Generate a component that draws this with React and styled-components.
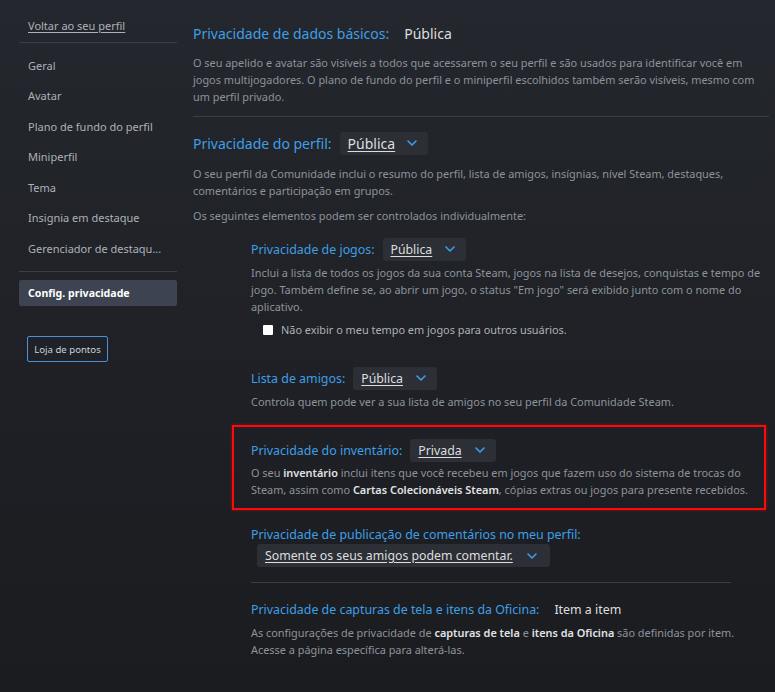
import React from "react";
import styled, { createGlobalStyle } from "styled-components";

const Global = createGlobalStyle`
  html, body { margin: 0; padding: 0; }
  body {
    background: linear-gradient(180deg, #24272d 0%, #1e2025 60%, #1b1c20 100%);
    min-height: 692px;
    font-family: "Noto Sans", "Open Sans", Arial, sans-serif;
    color: #acb2b8;
  }
`;

const Page = styled.div`
  display: flex;
  align-items: flex-start;
  gap: 16px;
  padding-left: 19px;
  width: 775px;
  min-height: 692px;
  box-sizing: border-box;
`;

const Sidebar = styled.nav`
  width: 158px;
  flex: none;
  display: flex;
  flex-direction: column;
  padding-top: 18px;
`;

const BackLink = styled.a`
  font-size: 11px;
  line-height: 16px;
  color: #acb2b8;
  text-decoration: underline;
  text-underline-offset: 2px;
  padding-left: 9px;
`;

const SideDivider = styled.div`
  height: 1px;
  background: #3a3e45;
  margin-top: ${(p) => p.$mt}px;
`;

const SideItem = styled.div`
  height: 30.5px;
  display: flex;
  align-items: center;
  padding-left: 9px;
  font-size: 11px;
  color: #acb2b8;
  white-space: nowrap;
`;

const SideList = styled.div`
  display: flex;
  flex-direction: column;
  margin-top: 7px;
`;

const SideSelected = styled.div`
  margin-top: 8px;
  height: 26px;
  display: flex;
  align-items: center;
  padding-left: 9px;
  border-radius: 2px;
  background: #3d4350;
  color: #ffffff;
  font-size: 10.6px;
  font-weight: 700;
`;

const PointsButton = styled.button`
  margin-top: 30px;
  margin-left: 8px;
  align-self: flex-start;
  height: 26px;
  width: 81px;
  padding: 0;
  background: transparent;
  border: 1px solid #4b8fd6;
  border-radius: 2px;
  color: #c6d4df;
  font-family: inherit;
  font-size: 9.6px;
`;

const Main = styled.main`
  width: 576px;
  flex: none;
  padding-top: 23px;
  display: flex;
  flex-direction: column;
`;

const TitleRow = styled.div`
  display: flex;
  align-items: center;
  gap: ${(p) => p.$gap ?? 8}px;
  min-height: ${(p) => p.$h ?? 20}px;
  margin-top: ${(p) => p.$mt ?? 0}px;
  font-size: ${(p) => p.$fs ?? 14}px;
`;

const Label = styled.span`
  color: #3e9fe6;
`;

const Value = styled.span`
  color: #dcdedf;
`;

const Desc = styled.p`
  margin: ${(p) => p.$mt ?? 0}px 0 0;
  font-size: 10.9px;
  line-height: 17px;
  color: #8c939b;
  b { color: #e1e3e5; font-weight: 600; }
`;

const Divider = styled.div`
  height: 1px;
  background: #3a3f47;
  margin-top: ${(p) => p.$mt}px;
  margin-right: ${(p) => p.$mr ?? 0}px;
`;

const Sub = styled.div`
  margin-left: 58px;
  display: flex;
  flex-direction: column;
`;

const Dropdown = styled.div`
  display: inline-flex;
  align-items: center;
  gap: ${(p) => p.$gap ?? 13}px;
  height: ${(p) => p.$h ?? 23}px;
  padding: 0 ${(p) => p.$pr ?? 11}px 0 8px;
  background: #2c2f36;
  border-radius: 3px;
  font-size: ${(p) => p.$fs ?? 12.3}px;
  margin-left: ${(p) => p.$ml ?? 0}px;
  margin-top: ${(p) => p.$mt ?? 0}px;
  align-self: flex-start;
  span {
    color: #dcdedf;
    text-decoration: underline;
    text-underline-offset: 2px;
  }
`;

const Chevron = () => (
  <svg width="10" height="6" viewBox="0 0 10 6" fill="none">
    <path d="M1 1l4 4 4-4" stroke="#3e9fe6" strokeWidth="1.6" strokeLinecap="round" strokeLinejoin="round" />
  </svg>
);

const CheckRow = styled.label`
  margin-top: 6px;
  margin-left: 12px;
  display: flex;
  align-items: center;
  gap: 8px;
  height: 17px;
  font-size: 10.9px;
  color: #acb2b8;
`;

const Box = styled.span`
  width: 10px;
  height: 10px;
  background: #ffffff;
  border-radius: 1px;
`;

const Highlight = styled.div`
  margin: 14.5px 0 0 -19px;
  width: 534px;
  box-sizing: border-box;
  border: 2px solid #ff0a0a;
  box-shadow: 0 0 3px rgba(255, 0, 0, 0.5);
  padding: 12px 0 10px 17px;
  display: flex;
  flex-direction: column;
`;

export default function App() {
  return (
    <>
      <Global />
      <Page>
        <Sidebar>
          <BackLink>Voltar ao seu perfil</BackLink>
          <SideDivider $mt={8} />
          <SideList>
            <SideItem>Geral</SideItem>
            <SideItem>Avatar</SideItem>
            <SideItem>Plano de fundo do perfil</SideItem>
            <SideItem>Miniperfil</SideItem>
            <SideItem>Tema</SideItem>
            <SideItem>Insignia em destaque</SideItem>
            <SideItem>Gerenciador de destaqu...</SideItem>
          </SideList>
          <SideDivider $mt={7.5} />
          <SideSelected>Config. privacidade</SideSelected>
          <PointsButton>Loja de pontos</PointsButton>
        </Sidebar>

        <Main>
          <TitleRow $gap={15}>
            <Label>Privacidade de dados básicos:</Label>
            <Value>Pública</Value>
          </TitleRow>
          <Desc $mt={10.5}>
            O seu apelido e avatar são visíveis a todos que acessarem o seu perfil e são usados para identificar você em jogos multijogadores. O plano de fundo do perfil e o miniperfil escolhidos também serão visíveis, mesmo com um perfil privado.
          </Desc>
          <Divider $mt={11} />

          <TitleRow $mt={15} $h={23}>
            <Label>Privacidade do perfil:</Label>
            <Dropdown $fs={14} $gap={12} $pr={11}>
              <span>Pública</span>
              <Chevron />
            </Dropdown>
          </TitleRow>
          <Desc $mt={10.5}>
            O seu perfil da Comunidade inclui o resumo do perfil, lista de amigos, insígnias, nível Steam, destaques, comentários e participação em grupos.
          </Desc>
          <Desc $mt={8}>Os seguintes elementos podem ser controlados individualmente:</Desc>

          <Sub>
            <TitleRow $mt={13.5} $h={24} $fs={12.4}>
              <Label>Privacidade de jogos:</Label>
              <Dropdown>
                <span>Pública</span>
                <Chevron />
              </Dropdown>
            </TitleRow>
            <Desc $mt={2.5}>
              Inclui a lista de todos os jogos da sua conta Steam, jogos na lista de desejos, conquistas e tempo de jogo. Também define se, ao abrir um jogo, o status "Em jogo" será exibido junto com o nome do aplicativo.
            </Desc>
            <CheckRow>
              <Box />
              Não exibir o meu tempo em jogos para outros usuários.
            </CheckRow>

            <TitleRow $mt={28.5} $h={23} $fs={12.4}>
              <Label>Lista de amigos:</Label>
              <Dropdown>
                <span>Pública</span>
                <Chevron />
              </Dropdown>
            </TitleRow>
            <Desc $mt={3.5}>Controla quem pode ver a sua lista de amigos no seu perfil da Comunidade Steam.</Desc>

            <Highlight>
              <TitleRow $h={23} $fs={12.4}>
                <Label>Privacidade do inventário:</Label>
                <Dropdown>
                  <span>Privada</span>
                  <Chevron />
                </Dropdown>
              </TitleRow>
              <Desc $mt={2.5}>
                O seu <b>inventário</b> inclui itens que você recebeu em jogos que fazem uso do sistema de trocas do Steam, assim como <b>Cartas Colecionáveis Steam</b>, cópias extras ou jogos para presente recebidos.
              </Desc>
            </Highlight>

            <TitleRow $mt={15} $h={18} $fs={12.4}>
              <Label>Privacidade de publicação de comentários no meu perfil:</Label>
            </TitleRow>
            <Dropdown $ml={6} $mt={1} $gap={14} $pr={13}>
              <span>Somente os seus amigos podem comentar.</span>
              <Chevron />
            </Dropdown>
            <Divider $mt={15} $mr={38} />

            <TitleRow $mt={15} $h={22} $fs={12.4} $gap={15}>
              <Label>Privacidade de capturas de tela e itens da Oficina:</Label>
              <Value>Item a item</Value>
            </TitleRow>
            <Desc $mt={4}>
              As configurações de privacidade de <b>capturas de tela</b> e <b>itens da Oficina</b> são definidas por item. Acesse a página específica para alterá-las.
            </Desc>
          </Sub>
        </Main>
      </Page>
    </>
  );
}
